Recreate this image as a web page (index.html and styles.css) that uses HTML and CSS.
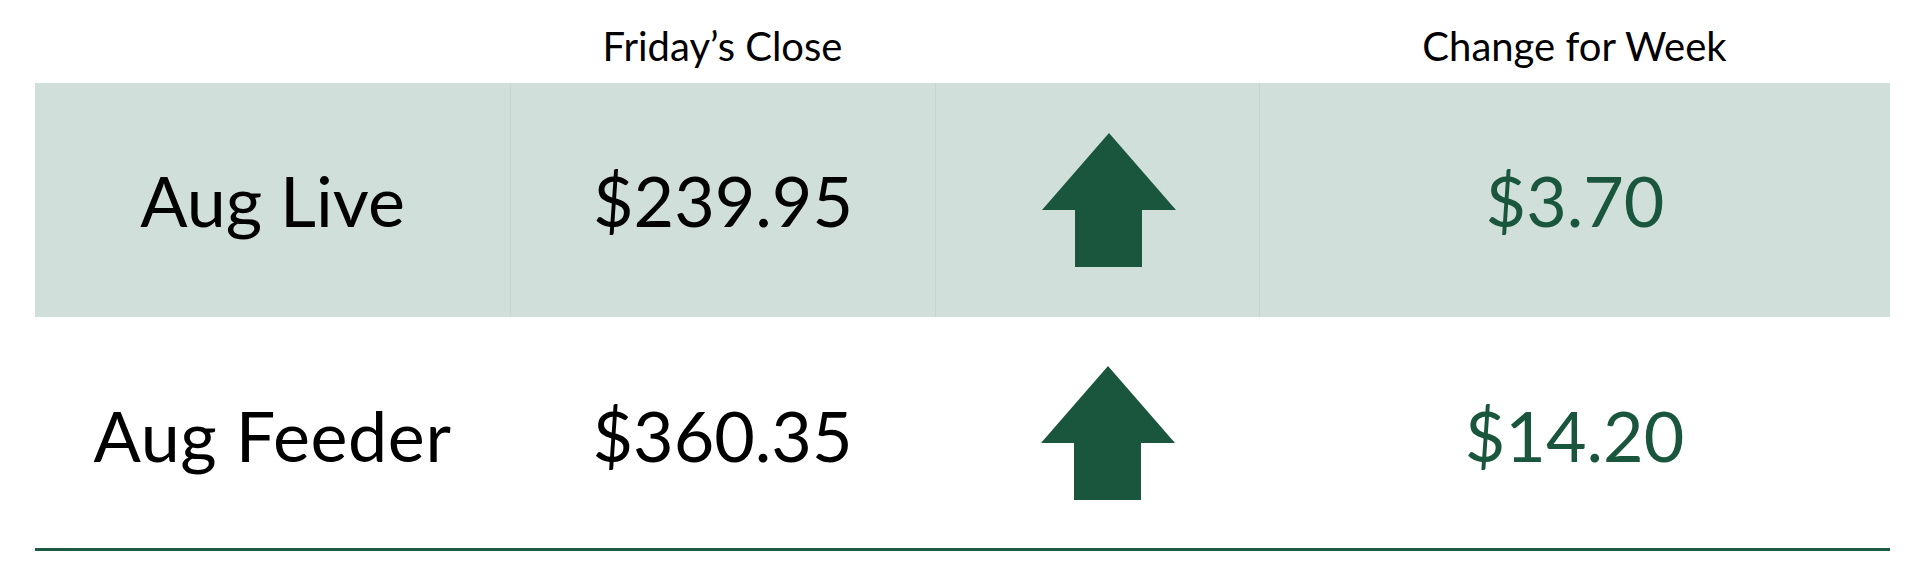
FILE: index.html
```html
<!DOCTYPE html>
<html lang="en">
<head>
<meta charset="utf-8">
<title>Weekly Futures Close</title>
<link rel="stylesheet" href="styles.css">
</head>
<body>
<div class="board">
  <div class="head">
    <div class="hcell"></div>
    <div class="hcell">Friday’s Close</div>
    <div class="hcell"></div>
    <div class="hcell">Change for Week</div>
  </div>
  <div class="row shaded">
    <div class="cell label">Aug Live</div>
    <div class="cell price">$239.95</div>
    <div class="cell dir">
      <svg class="arrow" viewBox="0 0 134 134" aria-hidden="true"><path d="M67 0 L134 77 L100 77 L100 134 L33 134 L33 77 L0 77 Z"/></svg>
    </div>
    <div class="cell change">$3.70</div>
  </div>
  <div class="row last">
    <div class="cell label">Aug Feeder</div>
    <div class="cell price">$360.35</div>
    <div class="cell dir">
      <svg class="arrow" viewBox="0 0 134 134" aria-hidden="true"><path d="M67 0 L134 77 L100 77 L100 134 L33 134 L33 77 L0 77 Z"/></svg>
    </div>
    <div class="cell change">$14.20</div>
  </div>
</div>
</body>
</html>
```

FILE: styles.css
```css
html, body {
  margin: 0;
  padding: 0;
  background: #ffffff;
}

body {
  font-family: Lato, "Liberation Sans", sans-serif;
  color: #000000;
}

.board {
  width: 1855px;
  margin-left: 35px;
}

.head,
.row {
  display: grid;
  grid-template-columns: 475px 425px 324px 631px;
}

.head {
  height: 83px;
}

.hcell {
  padding-top: 22px;
  font-size: 40px;
  line-height: 48px;
  text-align: center;
}

.row {
  height: 234px;
}

.row.last {
  height: 231px;
  border-bottom: 3px solid #1d5a44;
}

.shaded {
  background: #d1dfda;
}

.cell {
  display: flex;
  align-items: center;
  justify-content: center;
  font-size: 70px;
  line-height: 84px;
}

.last .cell {
  padding-top: 5px;
}

.last .label {
  letter-spacing: 0.6px;
}

.last .dir {
  padding-top: 0;
}

.shaded .cell + .cell {
  border-left: 1px solid #c4d6d0;
}

.change {
  color: #1a563e;
}

.dir {
  padding-left: 22px;
}

.arrow {
  width: 134px;
  height: 134px;
  display: block;
  fill: #1a563e;
}
```
